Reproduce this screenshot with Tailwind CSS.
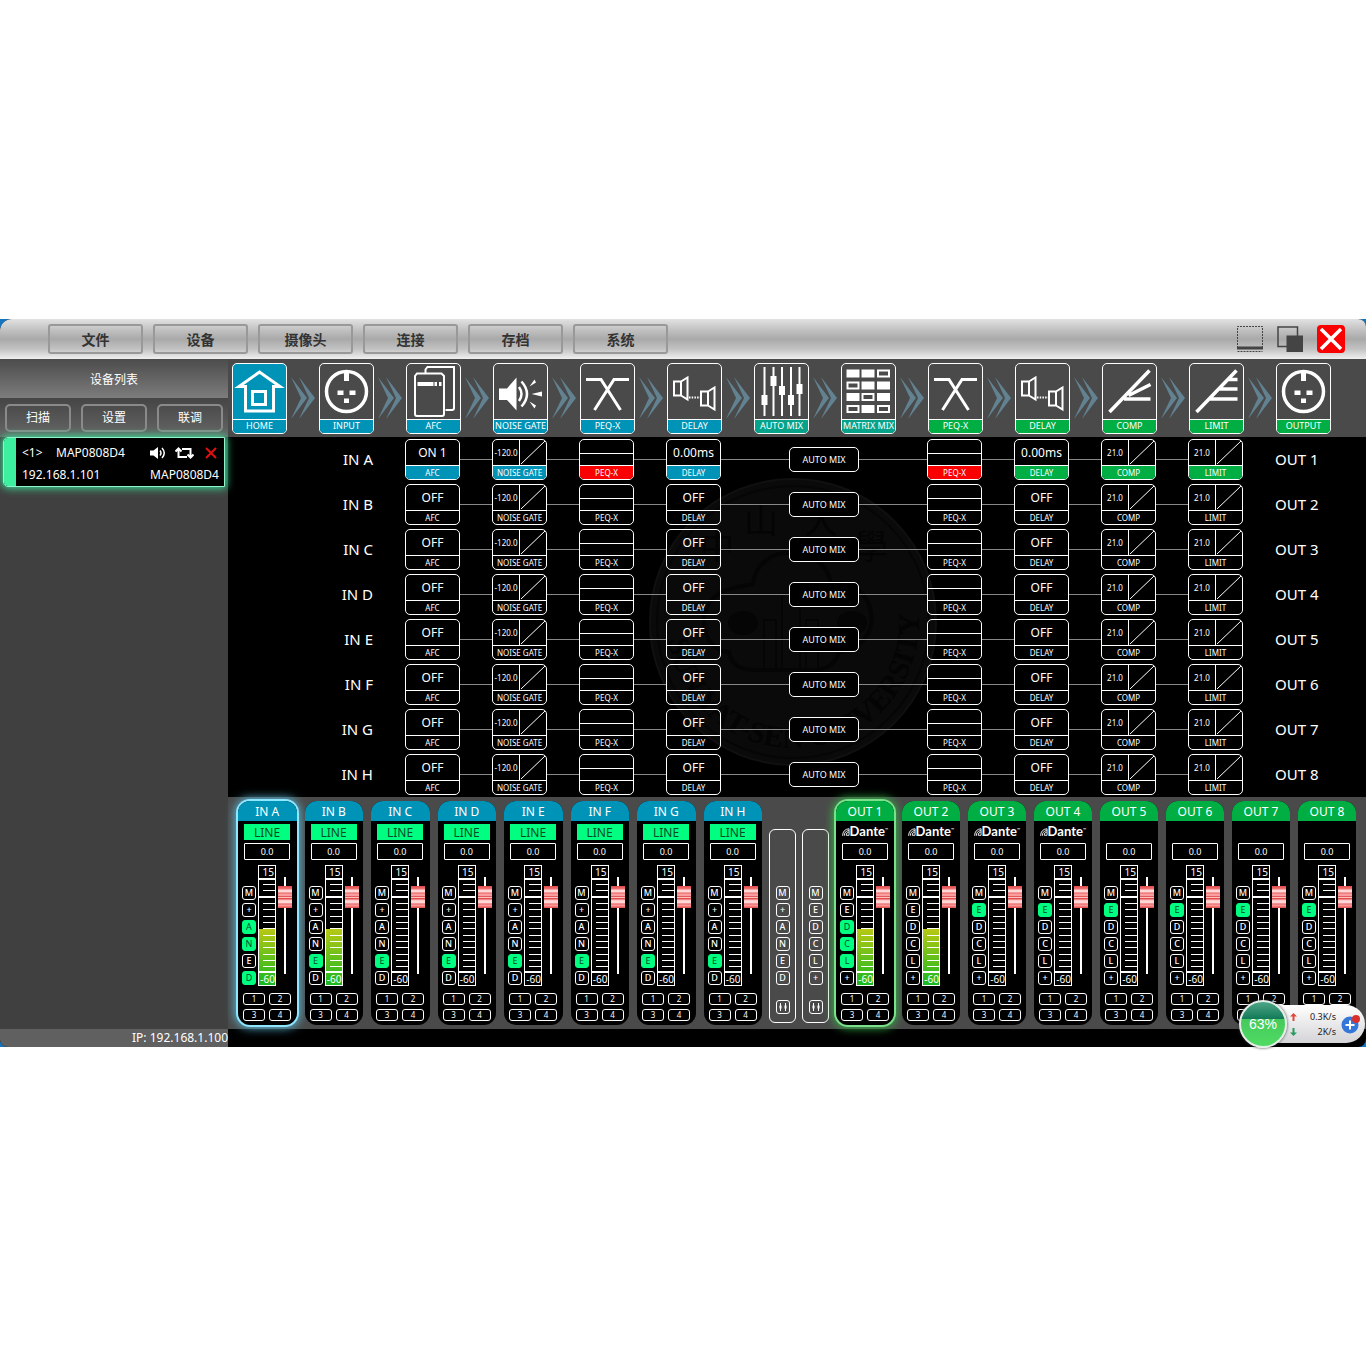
<!DOCTYPE html>
<html lang="zh-CN">
<head>
    <meta charset="UTF-8">
    <meta name="viewport" content="width=device-width, initial-scale=1.0">
    <title>MAP0808D4</title>
    <script src="https://cdn.jsdelivr.net/npm/@tailwindcss/browser@4"></script>
</head>
<body class="bg-white font-['Noto_Sans','Noto_Sans_CJK_SC',sans-serif] text-white">
    <div class="flex min-h-screen flex-col justify-center">
        <div class="relative bg-[#1474bd]">
            <div class="overflow-hidden rounded-tl-xl rounded-tr-lg rounded-b-lg bg-black">
                <!-- Title bar -->
                <header class="flex h-10 items-center justify-between bg-[linear-gradient(#e2e2e2,#c4c4c4_25%,#a9a9a9_50%,#c2c2c2_75%,#f0f0f0)] pr-[21px] pl-12">
                    <nav id="menu" class="flex gap-[10px]"></nav>
                    <div class="flex items-center gap-[14px]">
                        <button aria-label="Minimize">
                            <svg class="size-[26px]" viewBox="0 0 26 26" fill="none" stroke="#444"><path d="M.5 22V.5h25V22M.5 25.5h25" stroke-dasharray="2 1"/><path d="M0 22h26" stroke-width="3"/></svg>
                        </button>
                        <button aria-label="Restore">
                            <svg class="size-[26px]" viewBox="0 0 26 26"><path d="M1 1h19.500v19.500H1z" fill="none" stroke="#444" stroke-width="1.500"/><path d="M9.500 9.500H26V26H9.500z" fill="#444"/></svg>
                        </button>
                        <button aria-label="Close" class="rounded-[4px] bg-[#fb0000]">
                            <svg class="size-7" viewBox="0 0 28 28" stroke="#fff" stroke-width="3.500"><path d="M4 4l20 20M24 4L4 24"/></svg>
                        </button>
                    </div>
                </header>

                <div class="flex">
                    <!-- Devices -->
                    <aside class="flex w-[228px] shrink-0 flex-col bg-[#404040]">
                        <h2 class="flex h-[39px] items-center justify-center bg-linear-to-b from-[#4c4c4c] to-[#7d7d7d] pt-[2px] text-xs">设备列表</h2>
                        <div id="deviceActions" class="flex h-[39px] items-center justify-between bg-linear-to-b from-[#454545] to-[#666] px-[5px]"></div>
                        <div class="mx-[3px] flex h-[50px] rounded-l-[5px] border border-[#8ff5cc] bg-black text-xs shadow-[0_0_8px_1px_#35e59a]">
                            <div class="w-3 shrink-0 rounded-l-[4px] bg-[#3cf0a0]"></div>
                            <div class="flex flex-1 flex-col justify-between pt-1 pr-[5px] pl-[6px] leading-[22px]">
                                <div class="flex items-center">
                                    <span class="w-[34px]">&lt;1&gt;</span>
                                    <span class="flex-1">MAP0808D4</span>
                                    <button aria-label="Sound" class="mr-[9px]">
                                        <svg class="h-[14px] w-4" viewBox="0 0 16 14"><path d="M0 4.500h3.500L8 1v12L3.500 9.500H0z" fill="#fff"/><path d="M10 4.500q2 2.500 0 5M12 2q4.500 5 0 10" fill="none" stroke="#fff" stroke-width="1.500"/></svg>
                                    </button>
                                    <button aria-label="Sync" class="mr-[11px]">
                                        <svg class="h-3 w-[19px]" viewBox="0 0 19 12" fill="none" stroke="#fff" stroke-width="2"><path d="M3.500 2v8H12M.5 4.500l3-3 3 3M7 2h8.500v8M12.500 7.500l3 3 3-3"/></svg>
                                    </button>
                                    <button aria-label="Remove" class="mr-[2px]">
                                        <svg class="size-3" viewBox="0 0 12 12" stroke="#e01010" stroke-width="2"><path d="M1 1l10 10M11 1L1 11"/></svg>
                                    </button>
                                </div>
                                <div class="flex justify-between">
                                    <span>192.168.1.101</span>
                                    <span>MAP0808D4</span>
                                </div>
                            </div>
                        </div>
                        <div class="mt-auto h-[18px] bg-[#606060] text-right text-xs leading-[18px]">IP: 192.168.1.100</div>
                    </aside>

                    <main class="min-w-0 flex-1">
                        <!-- Signal chain -->
                        <div id="chain" class="grid h-[78px] grid-cols-[repeat(13,minmax(0,1fr))] items-center bg-[#4a4a4a] pr-[3px] pl-1"></div>

                        <!-- Channel matrix -->
                        <div class="relative">
                            <svg class="absolute top-[38px] left-[418px] size-[294px]" viewBox="0 0 294 294">
                                <circle cx="147" cy="147" r="143" fill="#0a0a0a" stroke="#101010" stroke-width="2"/>
                                <circle cx="147" cy="147" r="136" fill="none" stroke="#060606" stroke-width="2"/>
                                <path id="ring" d="M21 147A126 126 0 1 0 240 62" fill="none"/>
                                <text fill="#040404" font-size="30" font-family="Liberation Serif" font-weight="bold"><textPath href="#ring" startOffset="18">SUN YAT-SEN UNIVERSITY</textPath></text>
                                <g fill="#040404" font-size="34" font-family="Noto Sans CJK TC"><text x="54" y="84">中</text><text x="98" y="58">山</text><text x="158" y="58">大</text><text x="208" y="84">學</text></g>
                                <path d="M110 195c-20 0-25-8-27-18-28 0-38-50-2-62 16-6 22-4 26-6 4-42 72-42 78 0 44-8 60 60 8 68-4 14-14 18-26 18z" fill="none" stroke="#050505" stroke-width="4"/>
                                <path d="M118 195v-50h12v50m6 0v-76h18v76m6 0v-50h12v50" fill="none" stroke="#050505" stroke-width="2"/>
                                <ellipse cx="97" cy="148" rx="15" ry="12" fill="#050505"/>
                                <ellipse cx="206" cy="148" rx="15" ry="12" fill="#050505"/>
                            </svg>
                            <div id="matrix" class="relative"></div>
                        </div>

                        <!-- Mixer -->
                        <div class="flex h-[232px] bg-[#4a4a4a] px-[10px] py-1">
                            <div id="inputs" class="grid flex-[524] grid-cols-8 gap-2"></div>
                            <div id="links" class="mx-[7px] mt-7 mb-[2px] flex gap-[6px]"></div>
                            <div id="outputs" class="grid flex-[520] grid-cols-8 gap-2"></div>
                        </div>
                        <div class="h-[18px]"></div>
                    </main>
                </div>
            </div>

            <!-- Network monitor -->
            <div class="absolute right-[1px] bottom-1 flex h-[38px] w-[103px] items-center rounded-r-full bg-linear-to-b from-white to-[#d4d4d8] text-[9px] text-[#222]">
                <div class="-ml-[23px] flex size-12 shrink-0 items-center justify-center rounded-full border-2 border-[#e4eee8] bg-[linear-gradient(#4fa588,#127a58_38%,#45c95c_39%,#4fdc63)] font-['Liberation_Sans'] text-sm text-white shadow-[0_0_3px_#333]">63%</div>
                <div class="ml-[3px] flex flex-1 flex-col leading-[15px]">
                    <div class="flex items-center justify-between"><svg class="h-2 w-[7px]" viewBox="0 0 7 8"><path d="M3.500 0L7 3.500H4.500V8h-2V3.500H0z" fill="#e0483c"/></svg><span>0.3K/s</span></div>
                    <div class="flex items-center justify-between"><svg class="h-2 w-[7px]" viewBox="0 0 7 8"><path d="M3.500 8L7 4.500H4.500V0h-2v4.500H0z" fill="#2b9a62"/></svg><span>2K/s</span></div>
                </div>
                <button aria-label="Boost" class="mr-[5px] ml-[5px]">
                    <svg class="size-[19px]" viewBox="0 0 19 19"><circle cx="9" cy="10" r="8.500" fill="#3477d8"/><path d="M9 5.500v9M4.500 10h9" stroke="#fff" stroke-width="2"/><circle cx="15" cy="4" r="4" fill="#d9302c"/></svg>
                </button>
            </div>
        </div>
    </div>

    <script>
        const xlr = '<circle cx="26.5" cy="27.5" r="20" fill="none" stroke-width="3.500"/><path d="M24 8h5v9h-5zM17.500 26.500h6v4.500h-6zM29.500 26.500h6v4.500h-6zM24 34.500h5V39h-5z" fill="#fff" stroke="none"/>';
        const cross = '<path d="M5 15.500h15L39.500 46M48 15.500H33L13.500 46" stroke-width="3"/>';
        const speakers = '<path d="M6 17.500h7v14H6zM13 17.500l6.500-4v22l-6.500-4M33 27.500h7v14h-7zM40 27.500l6.500-4v22l-6.500-4" stroke-width="2"/><path d="M21 33.500h11" stroke-width="2" stroke-dasharray="1.500 1.200"/>';

        const icons = {
            home: '<path d="M12.500 22.500H6L26.500 8 47 22.500h-6.500V47h-28zM19.500 27.500h13v13h-13z" stroke-width="3"/>',
            xlr, cross, speakers,
            afc: '<path d="M18.500 8.500V5.500l2-2.500h26.500V44q0 2-2 2h-6.500M10 9.500h24.500l2.500 2.500v38q0 2-2 2H10q-2 0-2-2V12z" stroke-width="2"/><path d="M10.500 20h16M27.500 20h2.500M32 20h2.500" stroke-width="4"/>',
            noise: '<path d="M5 24.500h8l9.500-11v33L13 36H5z" fill="#fff" stroke="none"/><path d="M25 23q5 7 0 14M27.500 17.500q11 12.500 0 25" stroke-width="2.500"/><path d="M35.500 22.500l5-7 1.500 3zM37.500 30l10.500-2.500v5zM35.500 37.500l5 7 1.500-3z" fill="#fff" stroke="none"/>',
            auto: '<path d="M9.500 3v49M18.500 3v49M27 3v49M36 3v49M44.500 3v49" stroke-width="2"/><path d="M6.500 31h6v10h-6zM15.500 12h6v10h-6zM24 22h6v9h-6zM33 31h6v10h-6zM41.500 20h6v10h-6z" fill="#fff" stroke="none"/>',
            matrix: '<path d="M4.500 5.500h13v8h-13zM19.500 5.500h13v8h-13zM19.500 17.500h13v8h-13zM35 17.500h13v8H35zM4.500 29h13v8h-13zM35 29h13v8H35zM19.500 41h13v8h-13z" fill="#fff" stroke="none"/><path d="M36 6.500h11v6H36zM5.500 18.500h11v6h-11zM20.500 30h11v6h-11zM5.500 42h11v6h-11zM36 42h11v6H36z" stroke-width="2"/>',
            comp: '<path d="M6.500 48L46.500 6.500M25.500 31.500l22-11M21 35h26.500" stroke-width="3.500"/>',
            limit: '<path d="M6.500 48L46.500 6.500M37 15.500h10.500M29 25h18.500M20 35h27.500" stroke-width="3.500"/>',
        };

        const blue = 'bg-[#0093b8]';
        const teal = 'bg-[#07a28a]';
        const green = 'bg-[#00ae43]';

        const chain = [
            ['HOME', 'home', blue], ['INPUT', 'xlr', blue], ['AFC', 'afc', blue], ['NOISE GATE', 'noise', blue],
            ['PEQ-X', 'cross', blue], ['DELAY', 'speakers', blue], ['AUTO MIX', 'auto', teal], ['MATRIX MIX', 'matrix', teal],
            ['PEQ-X', 'cross', green], ['DELAY', 'speakers', green], ['COMP', 'comp', green], ['LIMIT', 'limit', green],
            ['OUTPUT', 'xlr', green],
        ];

        const arrow = '<svg class="ml-1 h-[42px] w-6" viewBox="0 0 24 42" fill="#628292"><path d="M0 0l16 21L0 42l10-21zM8 0l16 21L8 42l10-21z"/></svg>';

        document.getElementById('menu').innerHTML = ['文件', '设备', '摄像头', '连接', '存档', '系统'].map(t =>
            `<button class="h-[30px] w-[95px] rounded-[3px] border-2 border-[#999] pt-px text-sm font-bold text-[#333]">${t}</button>`).join('');

        document.getElementById('deviceActions').innerHTML = ['扫描', '设置', '联调'].map(t =>
            `<button class="h-7 w-[66px] rounded-[5px] border-2 border-[#8a8a8a] pt-px text-xs">${t}</button>`).join('');

        document.getElementById('chain').innerHTML = chain.map(([label, icon, color], i) => `
            <div class="flex items-center">
                <button class="flex h-[71px] w-[55px] shrink-0 flex-col overflow-hidden rounded-[5px] border border-white ${i === 0 ? blue : ''}">
                    <svg class="h-[55px] w-[53px]" viewBox="0 0 53 55" fill="none" stroke="#fff">${icons[icon]}</svg>
                    <span class="flex h-[14px] w-full items-center justify-center border-t border-white text-[9px] whitespace-nowrap ${color}">${label}</span>
                </button>
                ${i < chain.length - 1 ? arrow : ''}
            </div>`).join('');

        // One block of a channel row plus the wire to the next block
        function block(label, body, color, wire = true) {
            return `
                <div class="flex items-center">
                    <button class="flex h-[41px] w-[55px] shrink-0 flex-col overflow-hidden rounded-[5px] border border-white">
                        <span class="flex h-[25px] w-full">${body}</span>
                        <span class="flex h-[14px] w-full items-center justify-center border-t border-white text-[8px] leading-3 whitespace-nowrap ${color}">${label}</span>
                    </button>
                    ${wire ? '<i class="h-px flex-1 bg-[#888]"></i>' : ''}
                </div>`;
        }

        const textBody = t => `<span class="m-auto text-xs">${t}</span>`;
        const peqBody = '<span class="h-[14px] w-full border-b border-white"></span>';
        const curveBody = t => `<span class="flex w-[27px] items-center justify-center border-r border-white text-[8px]">${t}</span><svg class="h-[25px] w-[26px]" viewBox="0 0 26 25" stroke="#fff"><path d="M1 24L25 1"/></svg>`;

        document.getElementById('matrix').innerHTML = [...'ABCDEFGH'].map((ch, i) => {
            const on = i === 0;
            return `
            <div class="grid h-[45px] grid-cols-[repeat(13,minmax(0,1fr))] items-center pr-1 pl-[3px] text-[15px]">
                <span class="col-start-2 w-[55px] text-right">IN ${ch}</span>
                ${block('AFC', textBody(on ? 'ON 1' : 'OFF'), on ? blue : '')}
                ${block('NOISE GATE', curveBody('-120.0'), on ? blue : '')}
                ${block('PEQ-X', peqBody, on ? 'bg-[#fb0000]' : '')}
                ${block('DELAY', textBody(on ? '0.00ms' : 'OFF'), on ? blue : '')}
                <div class="col-span-2 flex items-center">
                    <i class="h-px w-9 bg-[#888]"></i>
                    <button class="h-[25px] w-[70px] rounded-[5px] border border-white bg-black pt-px text-[9px]">AUTO MIX</button>
                    <i class="h-px flex-1 bg-[#888]"></i>
                </div>
                ${block('PEQ-X', peqBody, on ? 'bg-[#fb0000]' : '')}
                ${block('DELAY', textBody(on ? '0.00ms' : 'OFF'), on ? green : '')}
                ${block('COMP', curveBody('21.0'), on ? green : '')}
                ${block('LIMIT', curveBody('21.0'), on ? green : '', false)}
                <span class="whitespace-nowrap">OUT ${i + 1}</span>
            </div>`;
        }).join('');

        const letterButtons = (letters, active) => [...letters].map(l =>
            `<button class="flex size-[14px] items-center justify-center rounded-[3px] border text-[9px] leading-[10px] ${active.includes(l) ? 'border-[#00ff80] bg-[#00ff80] text-[#064a28]' : 'border-white font-medium'}">${l}</button>`).join('');

        const dante = '<svg class="size-[10px]" viewBox="0 0 10 10" fill="none" stroke="#fff"><path d="M.8 10Q1 1.500 9.300.7V9.300H5.500Q5 6 9 5M3 10q0-6 6-7" stroke-width="1.200"/></svg><span class="font-[Lato] text-[13px] font-bold">Dante</span><sup class="text-[4px]">™</sup>';

        function strip(s) {
            return `
            <section class="flex min-w-0 flex-col rounded-xl bg-black ${s.ring || ''}">
                <h3 class="h-5 rounded-t-xl pt-px text-center text-xs leading-5 ${s.color}">${s.name}</h3>
                <div class="mt-[3px] ml-[6px] flex h-4 w-[46px] items-center">${s.source}</div>
                <input type="text" value="0.0" aria-label="${s.name} gain" class="mt-[3px] ml-[6px] h-[17px] w-[46px] rounded-[1px] border border-white text-center text-[9px]">
                <div class="mt-[5px] ml-1 flex h-[121px]">
                    <div class="mt-[21px] mr-[2px] flex flex-col gap-[3px]">${letterButtons(s.letters, s.active)}</div>
                    <div class="flex w-[18px] flex-col border border-white text-right text-[10px] leading-3 ${s.level ? 'bg-[linear-gradient(to_top,#18b820,#b8c814_56px,transparent_56px)]' : ''}">
                        <span class="h-3 pr-px">15</span>
                        <svg class="h-[95px] w-4" viewBox="0 0 16 95" stroke="#fff"><path d="M0 1h16M0 19h16M0 94h16" stroke-width="2"/><path d="M4 6.500h12M4 12.500h12M4 25.500h12M4 31.500h12M4 38.500h12M4 44.500h12M4 50.500h12M4 57.500h12M4 63.500h12M4 69.500h12M4 76.500h12M4 82.500h12M4 88.500h12"/></svg>
                        <span class="flex h-3 justify-end">-60</span>
                    </div>
                    <input type="range" min="0" max="75" value="66" aria-label="${s.name} fader" class="mt-3 ml-[2px] h-[97px] w-[14px] appearance-none bg-[linear-gradient(90deg,transparent_6px,#fff_6px,#fff_8px,transparent_8px)] [direction:rtl] [writing-mode:vertical-lr] [&::-webkit-slider-thumb]:h-[22px] [&::-webkit-slider-thumb]:w-[14px] [&::-webkit-slider-thumb]:appearance-none [&::-webkit-slider-thumb]:bg-[linear-gradient(#e04848,#ec7070_12%,#ffd8d8_20%,#ffd8d8_26%,#ec7070_32%,#ffb8b8_42%,#e04848_47%,#ffc8c8_52%,#e04848_57%,#ffc8c8_66%,#ffe4e4_74%,#ec7070_82%,#ff9c9c_88%,#e04848)]">
                </div>
                <div class="mt-[7px] ml-[5px] grid w-12 grid-cols-2 gap-1">
                    ${[1, 2, 3, 4].map(n => `<button class="h-3 rounded-[3px] border border-white text-[8px] leading-[10px]">${n}</button>`).join('')}
                </div>
            </section>`;
        }

        document.getElementById('inputs').innerHTML = [...'ABCDEFGH'].map((ch, i) => strip({
            name: 'IN ' + ch,
            color: blue,
            letters: 'M+ANED',
            active: i === 0 ? 'AND' : 'E',
            level: i < 2,
            source: '<button class="h-4 w-full bg-[#00ff80] pt-px text-xs leading-4 text-[#064a28]">LINE</button>',
            ring: i === 0 ? 'shadow-[0_0_0_2px_#8ee6ff,0_0_10px_3px_#58b8d8]' : '',
        })).join('');

        document.getElementById('outputs').innerHTML = [0, 1, 2, 3, 4, 5, 6, 7].map(i => strip({
            name: 'OUT ' + (i + 1),
            color: green,
            letters: 'MEDCL+',
            active: ['DCL', ''][i] ?? 'E',
            level: i < 2,
            source: i < 4 ? dante : '',
            ring: i === 0 ? 'shadow-[0_0_0_2px_#7be08a,0_0_10px_3px_#35b048]' : '',
        })).join('');

        document.getElementById('links').innerHTML = ['M+ANED', 'MEDCL+'].map(letters => `
            <div class="flex w-[27px] flex-col items-center gap-[3px] rounded-md border border-white pt-14">
                ${letterButtons(letters, '')}
                <button aria-label="Link faders" class="mt-3 flex size-[14px] items-center justify-center rounded-[3px] border border-white">
                    <svg class="size-[10px]" viewBox="0 0 10 10" stroke="#fff"><path d="M2.500 1v8M7.500 1v8"/><path d="M1.500 5h2M6.500 5h2" stroke-width="3"/></svg>
                </button>
            </div>`).join('');
    </script>
</body>
</html>
